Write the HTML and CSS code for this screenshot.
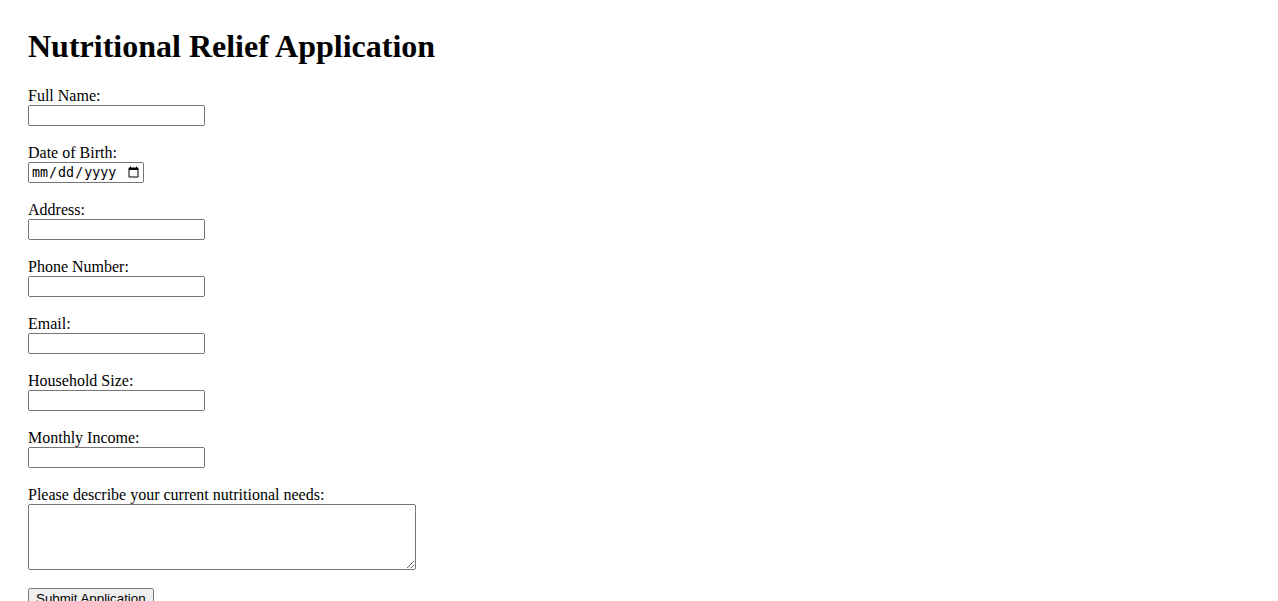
FILE: index.html
```html
<!DOCTYPE html>
<html>
<head>
<meta charset="utf-8">
<title>Nutritional Relief Application</title>
<link rel="stylesheet" href="styles.css">
</head>
<body class="page">
<div class="wrap">
<h1 class="title">Nutritional Relief Application</h1>
<form class="form">
<label for="name">Full Name:</label><br>
<input type="text" id="name" class="field"><br><br>
<label for="dob">Date of Birth:</label><br>
<input type="date" id="dob" class="date"><br><br>
<label for="address">Address:</label><br>
<input type="text" id="address" class="field"><br><br>
<label for="phone">Phone Number:</label><br>
<input type="tel" id="phone" class="field"><br><br>
<label for="email">Email:</label><br>
<input type="email" id="email" class="field"><br><br>
<label for="household">Household Size:</label><br>
<input type="number" id="household" class="field"><br><br>
<label for="income">Monthly Income:</label><br>
<input type="number" id="income" class="field"><br><br>
<label for="needs">Please describe your current nutritional needs:</label><br>
<textarea id="needs" class="area" rows="4" cols="50"></textarea><br><br>
<input type="submit" value="Submit Application" class="btn">
</form>
</div>
</body>
</html>
```
FILE: styles.css
```css
.page {
  margin: 0;
  padding: 7px 20px 20px;
  font-family: "Liberation Serif", "Times New Roman", serif;
  color: #000;
  background: #fff;
}
.wrap {
  padding: 0 8px;
}
.title {
  font-size: 2em;
  margin: 0.67em 0;
}
.field {
  box-sizing: border-box;
  width: 177px;
}
.date {
  box-sizing: border-box;
  width: 116px;
}
.area {
  box-sizing: border-box;
  width: 388px;
  vertical-align: top;
}
.btn {
  font-family: "Liberation Sans", Arial, sans-serif;
}
```
